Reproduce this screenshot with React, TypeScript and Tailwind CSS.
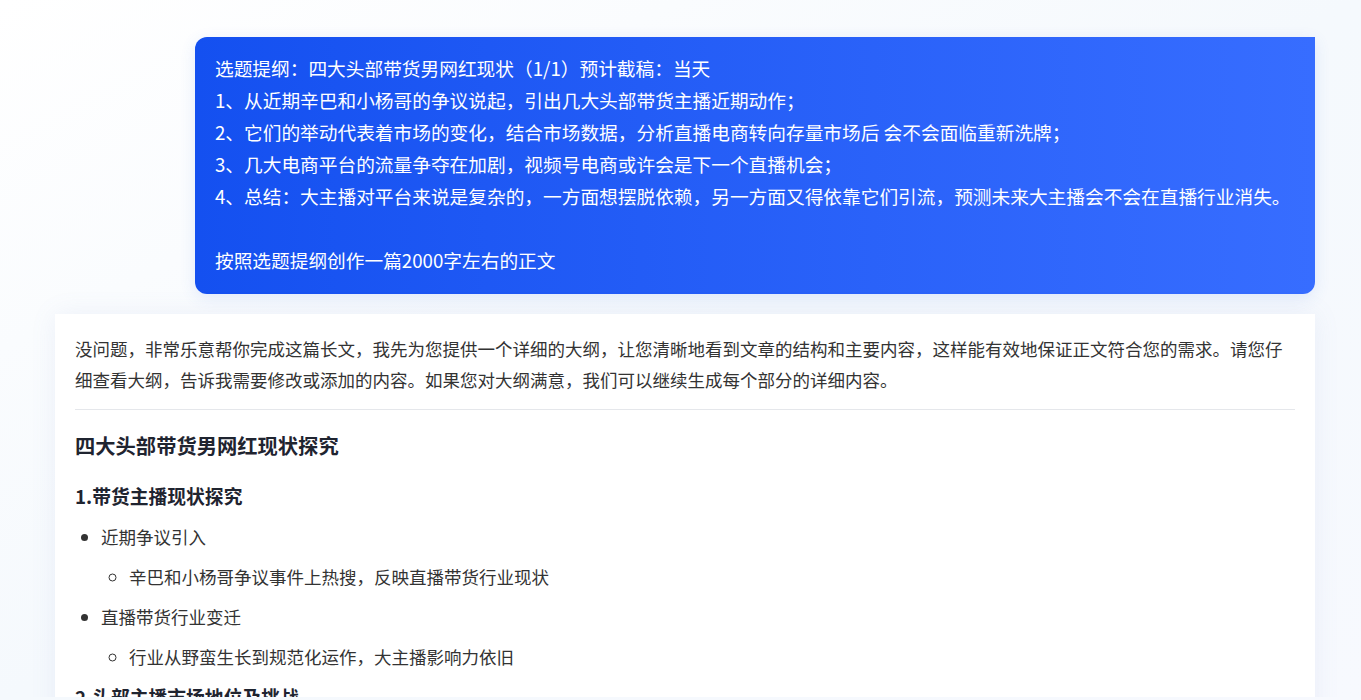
export default function App() {
  const outline = [
    "选题提纲：四大头部带货男网红现状（1/1）预计截稿：当天",
    "1、从近期辛巴和小杨哥的争议说起，引出几大头部带货主播近期动作；",
    "2、它们的举动代表着市场的变化，结合市场数据，分析直播电商转向存量市场后 会不会面临重新洗牌；",
    "3、几大电商平台的流量争夺在加剧，视频号电商或许会是下一个直播机会；",
    "4、总结：大主播对平台来说是复杂的，一方面想摆脱依赖，另一方面又得依靠它们引流，预测未来大主播会不会在直播行业消失。",
  ];

  return (
    <div
      className="h-[700px] overflow-hidden bg-linear-to-br from-white via-[#f5f9fd] to-[#f7f9fe]"
      style={{ fontFamily: '"Noto Sans CJK SC", "Noto Sans", sans-serif' }}
    >
      <div className="h-[697px] overflow-hidden pt-[37px]">
        {/* User prompt bubble */}
        <div className="ml-[195px] mr-[46px] rounded-xl rounded-tr-none bg-linear-to-r from-[#1450f0] to-[#376dff] px-5 pt-[15px] pb-[18px] text-[18.7px] leading-8 text-white shadow-[0_4px_16px_rgba(60,110,220,0.12)]">
          {outline.map((line) => (
            <div key={line}>{line}</div>
          ))}
          <div className="h-[32px]" />
          <div>按照选题提纲创作一篇2000字左右的正文</div>
        </div>

        {/* Assistant answer card */}
        <div className="ml-[55px] mr-[46px] mt-5 bg-white px-5 pt-[19px] pb-6 text-[17.5px] text-[#333] shadow-[0_0_24px_rgba(120,140,200,0.10)]">
          <p className="leading-[31px]">
            没问题，非常乐意帮你完成这篇长文，我先为您提供一个详细的大纲，让您清晰地看到文章的结构和主要内容，这样能有效地保证正文符合您的需求。请您仔细查看大纲，告诉我需要修改或添加的内容。如果您对大纲满意，我们可以继续生成每个部分的详细内容。
          </p>
          <div className="mt-[14px] border-t border-[#e5e7eb]" />

          <h2 className="mt-[21px] text-[20.3px] font-bold leading-7 text-[#1f2430]">
            四大头部带货男网红现状探究
          </h2>

          <h3 className="mt-[23px] text-[18.8px] font-bold leading-7 text-[#1f2430]">
            1.带货主播现状探究
          </h3>

          <ul className="mt-[7px] list-disc pl-[26px]">
            <li className="leading-[40px]">
              近期争议引入
              <ul className="list-[circle] pl-[28px]">
                <li className="leading-[40px]">辛巴和小杨哥争议事件上热搜，反映直播带货行业现状</li>
              </ul>
            </li>
            <li className="leading-[40px]">
              直播带货行业变迁
              <ul className="list-[circle] pl-[28px]">
                <li className="leading-[40px]">行业从野蛮生长到规范化运作，大主播影响力依旧</li>
              </ul>
            </li>
          </ul>

          <h3 className="mt-[6px] text-[18.8px] font-bold leading-7 text-[#1f2430]">
            2.头部主播市场地位及挑战
          </h3>

          <ul className="mt-[7px] list-disc pl-[26px]">
            <li className="leading-[40px]">
              头部主播市场份额
              <ul className="list-[circle] pl-[28px]">
                <li className="leading-[40px]">几大头部主播占据直播电商大部分流量</li>
              </ul>
            </li>
          </ul>
        </div>
      </div>
    </div>
  );
}
